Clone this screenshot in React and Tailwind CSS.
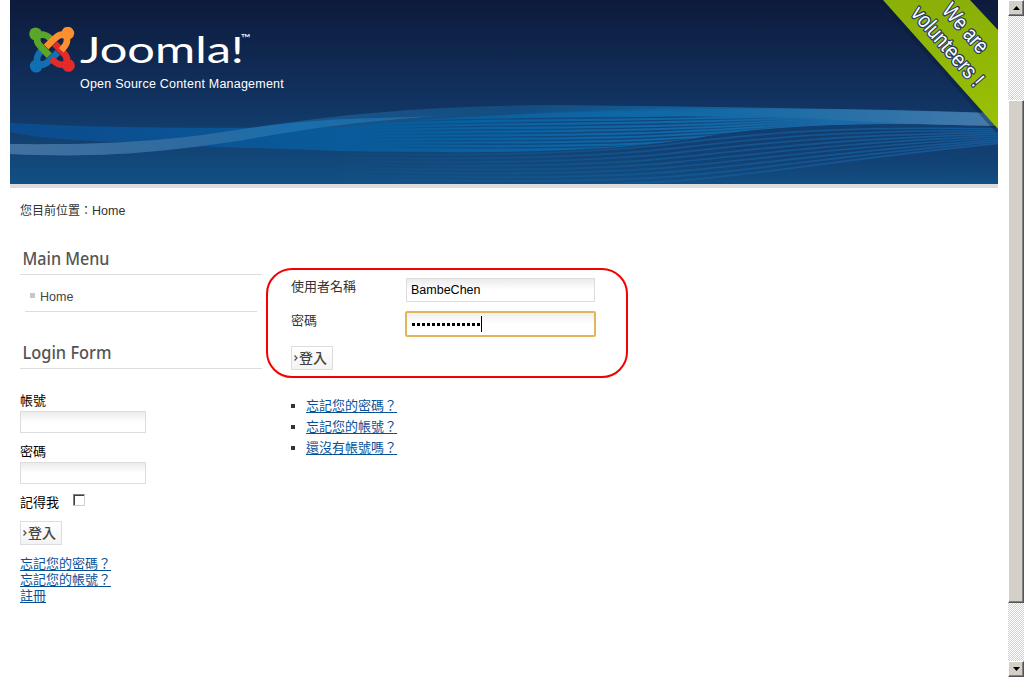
import React from "react";

const arm = (
  <>
    <circle cx="-50" cy="-48" r="19.5" stroke="none" />
    <path d="M-50-48L-42-40" strokeWidth="30" />
    <path d="M-46-42C-25-51-14-43 2-28" fill="none" strokeWidth="20" />
    <path d="M-44-45C-46-28-47-22-35-10L-8 18" fill="none" strokeWidth="21" />
  </>
);

function JoomlaMark() {
  return (
    <svg className="h-[46px] w-[46px] shrink-0" viewBox="-70 -68 140 138">
      <g fill="#59a62b" stroke="#59a62b">{arm}</g>
      <g fill="#1170b2" stroke="#1170b2" transform="rotate(270)">{arm}</g>
      <g fill="#e62a28" stroke="#e62a28" transform="rotate(180)">{arm}</g>
      <g fill="#fc8f30" stroke="#fc8f30" transform="rotate(90)">{arm}</g>
      <path d="M-35-10L-8 18" stroke="#59a62b" strokeWidth="21" />
      <path d="M-27-17L0 11M27 17L0 -11M-17 27L11 0M17 -27L-11 0" stroke="#153052" strokeWidth="2" opacity=".6" />
    </svg>
  );
}

function Waves() {
  const upper = Array.from({ length: 9 }, (_, i) => i);
  const lower = Array.from({ length: 9 }, (_, i) => i);
  return (
    <svg className="absolute inset-0 h-[184px] w-[988px]" viewBox="10 0 988 184">
      <defs>
        <linearGradient id="band" x1="0" x2="1">
          <stop offset="0" stopColor="#0c4b8d" />
          <stop offset=".45" stopColor="#08609f" />
          <stop offset=".7" stopColor="#126aa8" />
          <stop offset=".88" stopColor="#1c6aa7" />
          <stop offset="1" stopColor="#3977ab" />
        </linearGradient>
        <linearGradient id="crest" x1="0" x2="1">
          <stop offset="0" stopColor="#1d5c93" />
          <stop offset=".35" stopColor="#145084" />
          <stop offset=".6" stopColor="#1068a4" />
          <stop offset="1" stopColor="#477bab" />
        </linearGradient>
        <linearGradient id="pale" x1="0" x2="1">
          <stop offset="0" stopColor="#42719f" />
          <stop offset=".4" stopColor="#2f6a9e" />
          <stop offset=".65" stopColor="#1a6eac" />
          <stop offset="1" stopColor="#1c6ba5" />
        </linearGradient>
        <linearGradient id="dark" x1="0" x2="1">
          <stop offset="0" stopColor="#123f72" stopOpacity="0" />
          <stop offset=".35" stopColor="#123f72" stopOpacity=".9" />
          <stop offset="1" stopColor="#123f72" />
        </linearGradient>
        <linearGradient id="fadeDown" x1="0" x2="0" y1="0" y2="1">
          <stop offset="0" stopColor="#fff" />
          <stop offset=".45" stopColor="#fff" />
          <stop offset="1" stopColor="#000" />
        </linearGradient>
        <mask id="darkMask" maskUnits="userSpaceOnUse" x="10" y="120" width="988" height="64">
          <rect x="10" y="120" width="988" height="64" fill="url(#fadeDown)" />
        </mask>
        <linearGradient id="lit" gradientUnits="userSpaceOnUse" x1="340" x2="998" y1="0" y2="0">
          <stop offset="0" stopColor="#155d96" stopOpacity=".05" />
          <stop offset=".5" stopColor="#145b97" stopOpacity=".75" />
          <stop offset="1" stopColor="#165795" />
        </linearGradient>
        <linearGradient id="lines" gradientUnits="userSpaceOnUse" x1="350" x2="830" y1="0" y2="0">
          <stop offset="0" stopColor="#123f75" stopOpacity="0" />
          <stop offset=".25" stopColor="#123f75" stopOpacity=".6" />
          <stop offset=".65" stopColor="#123f75" stopOpacity=".9" />
          <stop offset="1" stopColor="#123f75" stopOpacity="0" />
        </linearGradient>
        <clipPath id="bandClip">
          <path d="M340 126C400 120 520 115 680 116L860 119L998 126C860 121 760 128 700 137C640 148 530 153 340 151Z" />
        </clipPath>
      </defs>
      <path d="M10 123C120 129 220 128 340 127C500 112 620 108 720 109C840 109 900 110 998 114V126C870 122 790 125 720 134C620 152 520 154 340 151C230 147 200 147 150 144C80 140 40 139 10 132Z" fill="url(#band)" />
      <path d="M250 128C350 113 430 106 560 105C700 107 850 108 998 113V126C860 123 840 119 660 111C550 111 440 118 340 127Z" fill="url(#crest)" opacity=".85" />
      <path d="M10 144C110 145 170 141 250 128C280 124 320 119 380 118L440 116C350 122 300 130 250 139C180 150 110 159 10 154Z" fill="url(#pale)" />
      <g mask="url(#darkMask)">
        <path d="M520 153C690 150 730 126 860 125C920 124 960 126 998 127V184H520Z" fill="url(#dark)" />
      </g>
      <g clipPath="url(#bandClip)" fill="none" stroke="url(#lines)" strokeWidth="1.4">
        {upper.map((i) => (
          <path key={i} d={`M340 ${125 + i * 2.8}C480 ${115 + i * 3.8} 640 ${121 + i * 4.6} 860 ${113 + i * 1.2}`} />
        ))}
      </g>
      <g fill="none" stroke="url(#lit)" strokeWidth="1.7">
        {lower.map((i) => (
          <path key={i} d={`M340 ${154 + i * 3.5}C480 ${156 + i * 3.6} 590 ${154 + i * 4.2} 680 ${143 + i * 4.7}S850 ${126 + i * 4} 998 ${129 + i * 1.8}`} />
        ))}
      </g>
    </svg>
  );
}

function Ribbon() {
  return (
    <svg className="absolute top-0 right-0 h-[136px] w-[124px]" viewBox="874 0 124 136">
      <defs>
        <linearGradient id="lime" x1="0" x2="0" y1="0" y2="1">
          <stop offset="0" stopColor="#8aaf08" />
          <stop offset="1" stopColor="#9ac202" />
        </linearGradient>
      </defs>
      <path d="M881 0L998 131" stroke="#071a35" strokeOpacity=".35" strokeWidth="5" />
      <path d="M883 0H970L998 30V129Z" fill="url(#lime)" />
      <g fontFamily="'Liberation Sans', Arial, sans-serif" fontSize="22" fill="#fff" stroke="#263966" strokeWidth="2.6" strokeLinejoin="round" paintOrder="stroke">
        <text transform="translate(941 11) rotate(49)" textLength="58" lengthAdjust="spacingAndGlyphs">We are</text>
        <text transform="translate(910 14) rotate(49)" textLength="98" lengthAdjust="spacingAndGlyphs">volunteers !</text>
      </g>
    </svg>
  );
}

function Banner() {
  return (
    <header className="relative ml-[10px] h-[188px] w-[988px] border-b-4 border-[#dcdcdc] bg-linear-to-b from-[#0d1a3b] via-[#113361] via-55% to-[#125084]">
      <Waves />
      <div className="relative flex pt-[27px] pl-[19px]">
        <JoomlaMark />
        <div className="pl-[5px]">
          <svg className="block h-[48px] w-[180px]" viewBox="0 0 180 48">
            <g fontFamily="Lato, sans-serif" fill="#fff">
              <text x="0" y="36" fontSize="37" textLength="164" lengthAdjust="spacingAndGlyphs">Joomla!</text>
              <text x="161" y="15" fontSize="11" textLength="10" lengthAdjust="spacingAndGlyphs">™</text>
            </g>
          </svg>
          <div className="pt-px text-[12.5px] leading-4 tracking-[0.22px] whitespace-nowrap text-white">Open Source Content Management</div>
        </div>
      </div>
      <Ribbon />
    </header>
  );
}

const field = "block border border-[#dddddd] bg-linear-to-b from-[#ebebeb] to-white to-50%";

function LoginButton() {
  return (
    <button className="flex h-6 w-[42px] items-center border border-[#dddddd] bg-linear-to-b from-white to-[#f3f3f3] pl-0.5 text-[14px] leading-4 font-medium text-[#444444]">
      <svg className="mr-px h-[6px] w-[4px]" viewBox="0 0 4 6"><path d="M.5.5L3 3L.5 5.5" fill="none" stroke="#555" strokeWidth="1.3" /></svg>
      登入
    </button>
  );
}

function Heading({ children, width }) {
  return (
    <h3 className="h-7 border-b border-[#dddddd] pl-[2px] text-[#555555]">
      <svg className="block h-7 w-[110px]">
        <text x="0.5" y="18" fontFamily="'Noto Sans', sans-serif" fontSize="17.5" fontWeight="500" fill="#555" textLength={width} lengthAdjust="spacingAndGlyphs">{children}</text>
      </svg>
    </h3>
  );
}

function Sidebar() {
  return (
    <aside className="w-[242px] text-black">
      <Heading width="87">Main Menu</Heading>
      <div className="mx-[5px] flex h-[37px] items-center border-b border-[#dddddd] pt-[8px] pl-[5px] text-[12.5px] text-[#444444]">
        <span className="mr-[5px] mb-[4px] h-[5px] w-[5px] bg-[#c8c8c8]" />Home
      </div>
      <div className="h-[29px]" />
      <Heading width="89">Login Form</Heading>
      <div className="pt-6">
        <div className="h-[18px] leading-4">帳號</div>
        <div className={`${field} h-[22px] w-[126px]`} />
      </div>
      <div className="pt-[11px]">
        <div className="h-[18px] leading-4">密碼</div>
        <div className={`${field} h-[22px] w-[126px]`} />
      </div>
      <div className="flex pt-[10px]">
        <span className="w-[53px] pt-px leading-4">記得我</span>
        <span className="h-3 w-3 border border-[#d4d0c8] border-t-[#808080] border-l-[#808080] bg-white shadow-[inset_1px_1px_0_#404040]" />
      </div>
      <div className="pt-[10px]"><LoginButton /></div>
      <nav className="flex flex-col items-start pt-[11px] leading-4 text-[#095197]">
        <a className="underline underline-offset-2">忘記您的密碼？</a>
        <a className="underline underline-offset-2">忘記您的帳號？</a>
        <a className="underline underline-offset-2">註冊</a>
      </nav>
    </aside>
  );
}

function LoginPanel() {
  return (
    <main className="ml-1 pt-[21px]">
      <form className="h-[110px] w-[362px] rounded-[26px] border-2 border-[#f40000] pt-2 pl-[23px]">
        <div className="flex h-[33px]">
          <label className="w-[115px] pt-px leading-4">使用者名稱</label>
          <div className={`${field} h-6 w-[189px] border-[#cccccc] pl-[4px] text-[12.5px] leading-[23px] text-black`}>BambeChen</div>
        </div>
        <div className="flex h-[35px]">
          <label className="w-[114px] pt-[2px] leading-4">密碼</label>
          <div className="flex h-[26px] w-[191px] items-center rounded-[2px] border-2 border-[#e4b55c] bg-linear-to-b from-[#efefef] to-white to-50% pl-[5px]">
            <div className="flex gap-[2px]">
              {Array.from({ length: 14 }, (_, i) => <span key={i} className="h-[3px] w-[3px] bg-black" />)}
            </div>
            <span className="ml-px h-4 w-px bg-black" />
          </div>
        </div>
        <LoginButton />
      </form>
      <ul className="pt-[17px] pl-[25px] leading-[21px]">
        {["忘記您的密碼？", "忘記您的帳號？", "還沒有帳號嗎？"].map((t) => (
          <li key={t} className="flex items-center">
            <span className="mr-[11px] h-1 w-1 bg-[#333333]" />
            <a className="text-[#095197] underline underline-offset-2">{t}</a>
          </li>
        ))}
      </ul>
    </main>
  );
}

const raised = "border border-t-[#ffffff] border-l-[#ffffff] border-r-[#555555] border-b-[#555555] bg-[#d4d0c8] shadow-[inset_-1px_-1px_0_#808080]";

function Scrollbar() {
  return (
    <div className="flex h-full w-4 flex-col bg-[repeating-conic-gradient(#d4d0c8_0_25%,#ffffff_0_50%)] bg-size-[2px_2px]">
      <div className={`${raised} flex h-4 items-center justify-center`}>
        <svg className="h-1 w-[7px]" viewBox="0 0 7 4"><path d="M0 4L3.5 0L7 4Z" /></svg>
      </div>
      <div className={`${raised} mt-[84px] h-[503px]`} />
      <div className={`${raised} mt-auto flex h-4 items-center justify-center`}>
        <svg className="h-1 w-[7px]" viewBox="0 0 7 4"><path d="M0 0H7L3.5 4Z" /></svg>
      </div>
    </div>
  );
}

export default function App() {
  return (
    <div className="flex h-[677px] w-[1024px] overflow-hidden bg-white font-['Liberation_Sans','Noto_Sans_CJK_TC',sans-serif] text-[13px] text-[#333333]">
      <div className="w-[1008px]">
        <Banner />
        <div className="flex h-[59px] items-start pt-[15px] pl-5 text-[12px] leading-4">
          <span>您目前位置：</span><span className="text-[12.5px]">Home</span>
        </div>
        <div className="flex pl-5">
          <Sidebar />
          <LoginPanel />
        </div>
      </div>
      <Scrollbar />
    </div>
  );
}
